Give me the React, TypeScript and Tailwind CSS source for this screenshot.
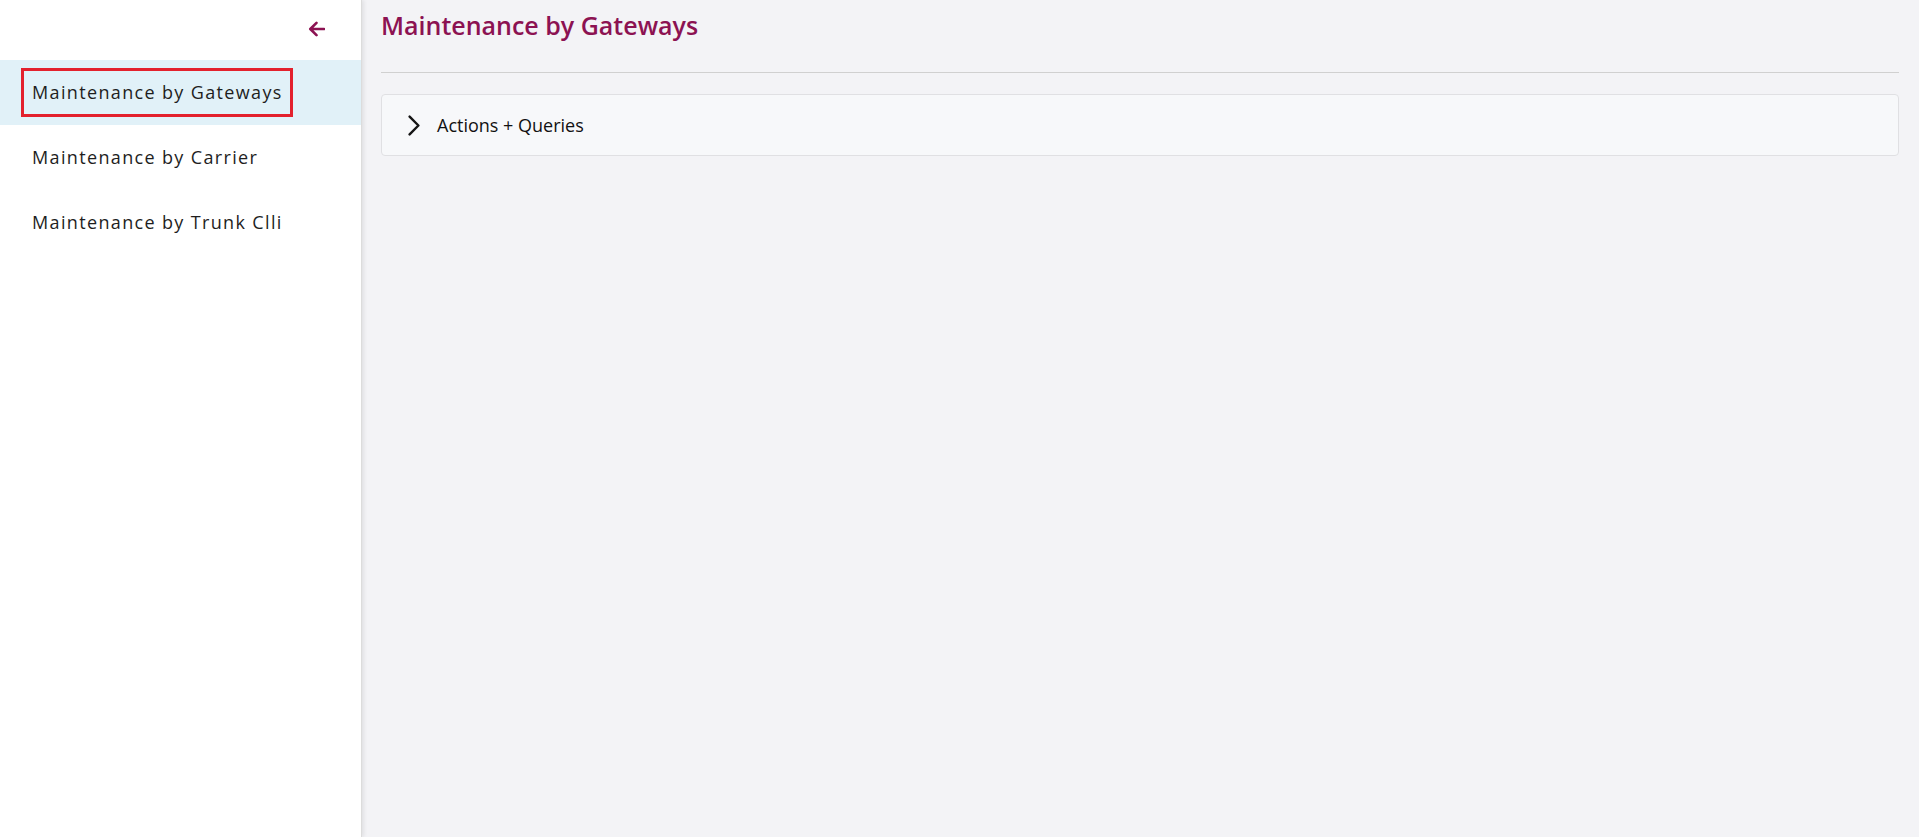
const items = ['Maintenance by Gateways', 'Maintenance by Carrier', 'Maintenance by Trunk Clli'];

function BackArrow() {
  return (
    <svg viewBox="0 0 17 16" className="h-[16px] w-[17px]" fill="none" stroke="#8c1252" strokeWidth={2.6} strokeLinecap="round" strokeLinejoin="round">
      <path d="M16 8H2.5M8.5 1.8L2.3 8l6.2 6.2" />
    </svg>
  );
}

function Chevron() {
  return (
    <svg viewBox="0 0 12 21" className="h-[21px] w-[12px]" fill="none" stroke="#151515" strokeWidth={2.4} strokeLinecap="round" strokeLinejoin="round">
      <path d="M1.6 1.6l8.8 8.9-8.8 8.9" />
    </svg>
  );
}

function Sidebar() {
  return (
    <aside className="relative z-10 flex w-[362px] shrink-0 flex-col border-r border-[#dcdcdc] bg-white shadow-[2px_0_4px_rgba(0,0,0,0.08)]">
      <div className="flex h-[60px] items-start justify-end pr-[36px] pt-[21px]">
        <BackArrow />
      </div>
      {items.map((label, i) => (
        <div
          key={label}
          className={`flex h-[65px] items-center ${i === 0 ? 'bg-[#e1f1f8] pl-[21px]' : 'pl-[32px]'}`}
        >
          {i === 0 ? (
            <span className="flex h-[49px] w-[272px] items-center border-[3px] border-[#e3212d] pl-[8px] text-[18px] tracking-[1.35px] text-[#1e1e1e]">
              {label}
            </span>
          ) : (
            <span className="text-[18px] tracking-[1.35px] text-[#1e1e1e]">{label}</span>
          )}
        </div>
      ))}
    </aside>
  );
}

export default function App() {
  return (
    <div className="flex h-[837px] w-full font-['Open_Sans',sans-serif] bg-[#f3f3f6]">
      <Sidebar />
      <main className="flex flex-1 flex-col pl-[19px] pr-[20px]">
        <h1 className="mt-[7px] text-[25px] font-semibold leading-[36px] text-[#8c1252]">Maintenance by Gateways</h1>
        <div className="mt-[29px] h-px bg-[#d0d0d0]" />
        <div className="mt-[21px] flex h-[62px] items-center rounded-[4px] border border-[#e0e0e3] bg-[#f7f8fa] pl-[26px]">
          <Chevron />
          <span className="ml-[17px] text-[18px] text-[#111]">Actions + Queries</span>
        </div>
      </main>
    </div>
  );
}
